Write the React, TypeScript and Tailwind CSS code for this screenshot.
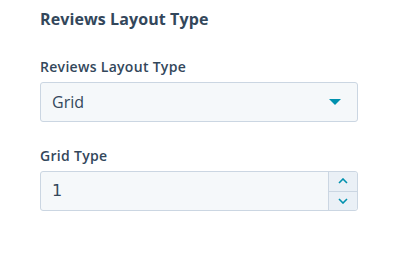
import React from 'react';

export default function App() {
  return (
    <div className="w-[394px] h-[274px] bg-white text-[#33475b]" style={{ fontFamily: '"Open Sans", "Noto Sans", sans-serif' }}>
      <div className="pl-10 pr-9 pt-[8px]">
        <h2 className="text-[16px] font-bold leading-[22px] tracking-[0.1px]">Reviews Layout Type</h2>

        {/* Layout select */}
        <div className="mt-[27px]">
          <label className="block text-[14px] font-semibold leading-[20px] tracking-[0.3px]">Reviews Layout Type</label>
          <div className="mt-[5px] h-[40px] w-[318px] flex items-center justify-between rounded-[3px] border border-[#cbd6e2] bg-[#f5f8fa] pl-[11px] pr-[16px]">
            <span className="text-[16px]">Grid</span>
            <svg width="12" height="6" viewBox="0 0 12 6">
              <path d="M0 0h12L6 6z" fill="#0091ae" />
            </svg>
          </div>
        </div>

        {/* Grid type */}
        <div className="mt-[24px]">
          <label className="block text-[14px] font-semibold leading-[20px] tracking-[0.3px]">Grid Type</label>
          <div className="mt-[5px] h-[40px] w-[318px] flex rounded-[3px] border border-[#cbd6e2] bg-[#f5f8fa]">
            <div className="flex-1 flex items-center pl-[11px] text-[16px]" style={{ fontFamily: '"DejaVu Sans", sans-serif' }}>1</div>
            <div className="w-[29px] flex flex-col border-l border-[#cbd6e2] bg-[#eaf0f6] rounded-r-[3px]">
              <div className="flex-1 flex items-center justify-center border-b border-[#cbd6e2]">
                <svg width="10" height="6" viewBox="0 0 10 6"><path d="M1 5l4-4 4 4" fill="none" stroke="#0091ae" strokeWidth="1.6" /></svg>
              </div>
              <div className="flex-1 flex items-center justify-center">
                <svg width="10" height="6" viewBox="0 0 10 6"><path d="M1 1l4 4 4-4" fill="none" stroke="#0091ae" strokeWidth="1.6" /></svg>
              </div>
            </div>
          </div>
        </div>
      </div>
    </div>
  );
}
